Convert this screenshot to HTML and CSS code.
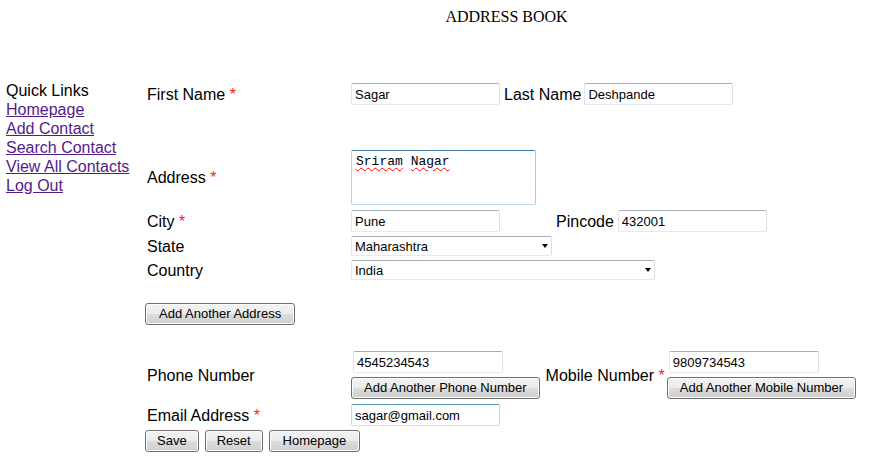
FILE: index.html
```html
<!DOCTYPE html>
<html>
<head>
<meta charset="utf-8">
<title>Address Book</title>
<link rel="stylesheet" href="styles.css">
</head>
<body>
<header class="title">ADDRESS BOOK</header>
<div class="page">
  <nav class="links">
    <div>Quick Links</div>
    <a href="#">Homepage</a>
    <a href="#">Add Contact</a>
    <a href="#">Search Contact</a>
    <a href="#">View All Contacts</a>
    <a href="#">Log Out</a>
  </nav>
  <form class="form">
    <div class="row r-name">
      <label class="lbl">First Name <span class="req">*</span></label>
      <input class="txt" type="text" value="Sagar">
      <span class="lbl2 lbl-last">Last Name</span>
      <input class="txt" type="text" value="Deshpande">
    </div>
    <div class="row r-addr">
      <label class="lbl">Address <span class="req">*</span></label>
      <div class="area" role="textbox"><span class="sp">Sriram</span> <span class="sp">Nagar</span></div>
    </div>
    <div class="row r-city">
      <label class="lbl">City <span class="req">*</span></label>
      <input class="txt" type="text" value="Pune">
      <span class="lbl2 lbl-pin">Pincode</span>
      <input class="txt" type="text" value="432001">
    </div>
    <div class="row r-state">
      <label class="lbl">State</label>
      <div class="selwrap w-state"><select class="sel"><option>Maharashtra</option></select></div>
    </div>
    <div class="row r-country">
      <label class="lbl">Country</label>
      <div class="selwrap w-country"><select class="sel"><option>India</option></select></div>
    </div>
    <div class="row r-addbtn">
      <button type="button" class="btn btn-wide">Add Another Address</button>
    </div>
    <div class="row r-phone">
      <label class="lbl">Phone Number</label>
      <div class="stack">
        <input class="txt in-stack" type="text" value="4545234543">
        <button type="button" class="btn btn-mid">Add Another Phone Number</button>
      </div>
      <span class="lbl2 lbl-mob">Mobile Number <span class="req">*</span></span>
      <div class="stack">
        <input class="txt in-stack" type="text" value="9809734543">
        <button type="button" class="btn btn-mid">Add Another Mobile Number</button>
      </div>
    </div>
    <div class="row r-email">
      <label class="lbl">Email Address <span class="req">*</span></label>
      <input class="txt txt-hover" type="text" value="sagar@gmail.com">
    </div>
    <div class="row r-actions">
      <button type="button" class="btn btn-save">Save</button>
      <button type="button" class="btn btn-reset">Reset</button>
      <button type="button" class="btn btn-home">Homepage</button>
    </div>
  </form>
</div>
</body>
</html>
```
FILE: styles.css
```css
html, body {
  margin: 0;
  padding: 0;
  background: #ffffff;
}
body {
  font-family: "Liberation Sans", Arial, sans-serif;
  font-size: 16px;
  color: #000000;
}
.title {
  font-family: "Liberation Serif", "Times New Roman", serif;
  font-size: 16px;
  line-height: 18px;
  text-align: center;
  padding: 8px 0 0 124px;
  margin-bottom: 54px;
}
.page {
  display: flex;
  align-items: flex-start;
}
.links {
  width: 145px;
  box-sizing: border-box;
  padding: 1px 0 0 6px;
  line-height: 19px;
  display: flex;
  flex-direction: column;
  align-items: flex-start;
}
.links a {
  color: #551a8b;
  text-decoration: underline;
}
.form {
  margin: 0;
  padding-top: 3px;
  display: flex;
  flex-direction: column;
  align-items: flex-start;
}
.row {
  display: flex;
  align-items: center;
}
.lbl {
  width: 206px;
  box-sizing: border-box;
  padding-left: 2px;
  line-height: 19px;
  flex: none;
}
.lbl2 {
  line-height: 19px;
  flex: none;
}
.req {
  color: #ff2020;
}
.lbl-last { margin: 0 3px 0 4px; }
.lbl-pin { margin: 0 4px 0 56px; }
.lbl-mob { margin: 0 2px 0 6px; }

.txt {
  width: 149px;
  height: 22px;
  box-sizing: border-box;
  margin: 0;
  padding: 0 3px;
  border: 1px solid;
  border-color: #abadb3 #dbdfe6 #e3e9ef #e2e3ea;
  border-radius: 2px;
  font-family: "Liberation Sans", Arial, sans-serif;
  font-size: 13px;
  color: #000000;
  background: #ffffff;
  outline: none;
}
.txt-hover {
  border-color: #5794bf #b7d5ea #c7e2f1 #c5daed;
}
.area {
  width: 185px;
  height: 55px;
  box-sizing: border-box;
  border: 1px solid;
  border-color: #3d7bad #a4c9e3 #b7d9ed #b5cfe7;
  border-radius: 2px;
  padding: 3px 4px;
  font-family: "Liberation Mono", "Courier New", monospace;
  font-size: 13px;
  line-height: 15px;
  white-space: pre;
}
.sp {
  text-decoration: underline wavy #ff0000;
  text-decoration-thickness: 1px;
  text-underline-offset: 2px;
}
.r-name { height: 22px; }
.r-addr { margin-top: 45px; }
.r-city { margin-top: 5px; }
.r-state { margin-top: 4px; }
.r-country { margin-top: 4px; }
.r-addbtn { margin-top: 23px; }
.r-phone { margin-top: 26px; }
.r-email { margin-top: 5px; }
.r-actions { margin-top: 4px; gap: 6px; }

.selwrap {
  position: relative;
  height: 20px;
}
.w-state { width: 201px; }
.w-country { width: 304px; }
.selwrap::after {
  content: "";
  position: absolute;
  right: 4px;
  top: 8px;
  width: 0;
  height: 0;
  border-left: 3.5px solid transparent;
  border-right: 3.5px solid transparent;
  border-top: 4px solid #000000;
  pointer-events: none;
}
.sel {
  appearance: none;
  -webkit-appearance: none;
  width: 100%;
  height: 20px;
  box-sizing: border-box;
  margin: 0;
  padding: 0 3px;
  border: 1px solid;
  border-color: #abadb3 #dbdfe6 #e3e9ef #e2e3ea;
  border-radius: 2px;
  background: #ffffff;
  font-family: "Liberation Sans", Arial, sans-serif;
  font-size: 13px;
  color: #000000;
  outline: none;
}
.stack {
  display: flex;
  flex-direction: column;
  align-items: flex-start;
  gap: 4px;
}
.in-stack {
  width: 150px;
  margin-left: 2px;
}
.btn {
  height: 22px;
  box-sizing: border-box;
  margin: 0;
  border: 1px solid #707070;
  border-radius: 3px;
  background: linear-gradient(#f2f2f2 0%, #ebebeb 50%, #dddddd 50%, #cfcfcf 100%);
  box-shadow: inset 0 0 0 1px #fcfcfc;
  font-family: "Liberation Sans", Arial, sans-serif;
  font-size: 13px;
  color: #000000;
  line-height: 18px;
  cursor: default;
}
.btn-wide { padding: 0 13px; }
.btn-mid { padding: 0 12px; }
.btn-save { padding: 0 11px; }
.btn-reset { padding: 0 11px; }
.btn-home { padding: 0 13px; }
```
